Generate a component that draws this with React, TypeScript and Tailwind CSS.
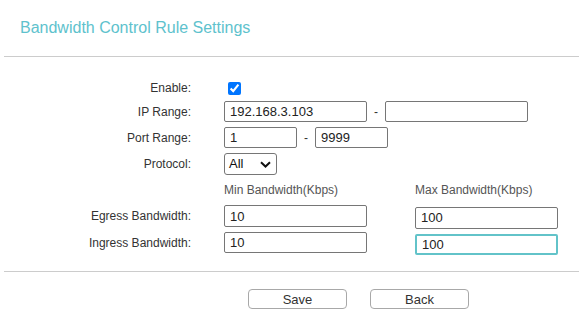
import React from "react";

const font = { fontFamily: '"Liberation Sans", Arial, sans-serif' };

function Label({ children }: { children: React.ReactNode }) {
  return <div className="w-[191px] shrink-0 text-right text-[12px] text-[#333]">{children}</div>;
}

function TextBox({ value, w, focused }: { value: string; w: string; focused?: boolean }) {
  return (
    <input
      type="text"
      defaultValue={value}
      className={
        "h-full rounded-[2px] bg-white px-[5px] text-[13px] text-[#222] outline-none " +
        w +
        (focused ? " border-2 border-[#62c3c9] px-[4px]" : " border border-[#767676]")
      }
    />
  );
}

export default function App() {
  return (
    <div className="h-[332px] w-[579px] bg-white" style={font}>
      <div className="flex h-[56px] items-center pl-[20px] text-[16px] text-[#5ec2cd]">
        Bandwidth Control Rule Settings
      </div>
      <div className="ml-[4px] h-px bg-[#cccccc]" />

      {/* Enable */}
      <div className="mt-[23px] flex h-[16px] items-center">
        <Label>Enable:</Label>
        <div className="ml-[33px] flex items-center">
          <input type="checkbox" defaultChecked className="ml-[4px] h-[13px] w-[13px]" />
        </div>
      </div>

      {/* IP Range */}
      <div className="mt-[5px] flex h-[21px] items-center">
        <Label>IP Range:</Label>
        <div className="ml-[33px] flex h-full items-center">
          <TextBox value="192.168.3.103" w="w-[143px]" />
          <span className="w-[18px] text-center text-[12px] text-[#333]">-</span>
          <TextBox value="" w="w-[143px]" />
        </div>
      </div>

      {/* Port Range */}
      <div className="mt-[5px] flex h-[21px] items-center">
        <Label>Port Range:</Label>
        <div className="ml-[33px] flex h-full items-center">
          <TextBox value="1" w="w-[73px]" />
          <span className="w-[18px] text-center text-[12px] text-[#333]">-</span>
          <TextBox value="9999" w="w-[73px]" />
        </div>
      </div>

      {/* Protocol */}
      <div className="mt-[5px] flex h-[22px] items-center">
        <Label>Protocol:</Label>
        <div className="ml-[33px] flex h-full w-[53px] items-center justify-between rounded-[3px] border border-[#767676] pl-[4px] pr-[4px] text-[13px] text-[#111]">
          <span>All</span>
          <svg width="11" height="7" viewBox="0 0 11 7" className="mr-[1px]">
            <path d="M1 1.2 L5.5 5.5 L10 1.2" fill="none" stroke="#111" strokeWidth="2" />
          </svg>
        </div>
      </div>

      {/* Bandwidth header */}
      <div className="flex h-[30px] items-center text-[12px] text-[#555]">
        <div className="ml-[224px] w-[143px]">Min Bandwidth(Kbps)</div>
        <div className="ml-[48px]">Max Bandwidth(Kbps)</div>
      </div>

      {/* Egress */}
      <div className="flex h-[22px] items-center">
        <Label>Egress Bandwidth:</Label>
        <div className="ml-[33px] flex h-full items-center">
          <TextBox value="10" w="w-[143px]" />
          <div className="ml-[48px] h-full">
            <TextBox value="100" w="w-[143px]" />
          </div>
        </div>
      </div>

      {/* Ingress */}
      <div className="mt-[5px] flex h-[21px] items-center">
        <Label>Ingress Bandwidth:</Label>
        <div className="ml-[33px] flex h-full items-center">
          <TextBox value="10" w="w-[143px]" />
          <div className="ml-[48px] h-full">
            <TextBox value="100" w="w-[143px]" focused />
          </div>
        </div>
      </div>

      <div className="ml-[4px] mt-[18px] h-px bg-[#cccccc]" />

      <div className="mt-[17px] flex gap-[23px] pl-[248px]">
        <button className="h-[20px] w-[99px] rounded-[4px] border border-[#a8a8a8] bg-white text-[13px] text-[#333]">
          Save
        </button>
        <button className="h-[20px] w-[99px] rounded-[4px] border border-[#a8a8a8] bg-white text-[13px] text-[#333]">
          Back
        </button>
      </div>
    </div>
  );
}
